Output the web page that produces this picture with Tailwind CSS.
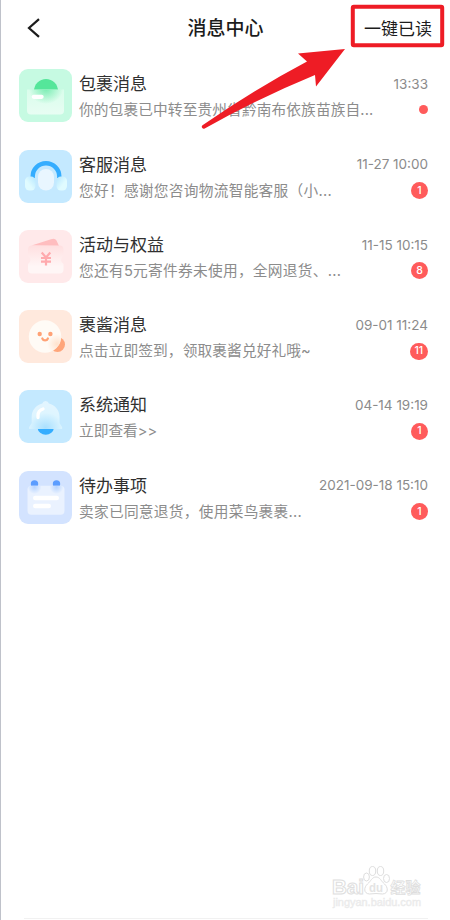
<!DOCTYPE html>
<html lang="zh-CN">
  <head>
    <meta charset="UTF-8" />
    <meta name="viewport" content="width=device-width, initial-scale=1.0" />
    <title>消息中心</title>
    <script src="https://cdn.jsdelivr.net/npm/@tailwindcss/browser@4"></script>
  </head>
  <body class="bg-white font-['Inter','Noto_Sans_CJK_SC',sans-serif]">
    <div class="relative flex flex-col w-[450px] h-[920px] overflow-hidden border-l border-[#bfc2ca] bg-white">
      <!-- header -->
      <header class="grid grid-cols-3 items-center h-14 pl-[25px] pr-[18px] text-[#1c1c1c]">
        <svg class="w-4 h-5" viewBox="0 0 16 20" fill="none" stroke="#1c1c1c" stroke-width="2.2">
          <path d="M13 1.2 3 10l10 8.800" />
        </svg>
        <h1 class="text-[19px] leading-7 font-medium whitespace-nowrap justify-self-center ml-[-7px] mt-0.5">消息中心</h1>
        <button class="text-[17px] leading-6 whitespace-nowrap justify-self-end mt-0.5">一键已读</button>
      </header>

      <!-- messages -->
      <ul class="flex flex-col pl-[18px] pr-[22px] pt-[13.3px]">
        <li class="flex h-[80.25px]">
          <svg class="w-[53px] h-[53px] shrink-0" viewBox="0 0 53 53">
            <defs>
              <linearGradient id="parcel" x1="0" y1="0" x2="0" y2="1">
                <stop offset="0" stop-color="#d9fdeb" />
                <stop offset="1" stop-color="#e8fdf3" />
              </linearGradient>
              <radialGradient id="parcelGlow">
                <stop offset="0" stop-color="#7cedb4" />
                <stop offset="1" stop-color="#7cedb4" stop-opacity="0" />
              </radialGradient>
              <clipPath id="parcelClip"><path d="M8 20.5h37v21a4 4 0 0 1-4 4H12a4 4 0 0 1-4-4z" /></clipPath>
            </defs>
            <rect width="53" height="53" rx="9" fill="#c6fae2" />
            <circle cx="27" cy="22" r="12" fill="#55e69a" />
            <g clip-path="url(#parcelClip)">
              <rect x="8" y="20" width="37" height="26" fill="url(#parcel)" />
              <ellipse cx="27" cy="20" rx="17" ry="15" fill="url(#parcelGlow)" />
            </g>
            <rect x="12.7" y="25.7" width="12" height="4.2" rx="2.1" fill="#fff" />
          </svg>
          <div class="flex-1 pl-[7px] pt-px">
            <div class="flex justify-between items-center h-7">
              <h2 class="text-[17px] leading-7 text-[#303030]">包裹消息</h2>
              <time class="text-[13.5px] text-[#8b8b8b]">13:33</time>
            </div>
            <div class="flex justify-between items-center h-6">
              <p class="text-[14.7px] tracking-[0.12px] text-[#8c8c8c] whitespace-nowrap">你的包裹已中转至贵州省黔南布依族苗族自...</p>
              <span class="size-[9px] rounded-full bg-[#ff5b5b] -mt-px"></span>
            </div>
          </div>
        </li>

        <li class="flex h-[80.25px]">
          <svg class="w-[53px] h-[53px] shrink-0" viewBox="0 0 53 53">
            <defs>
              <linearGradient id="earL" x1="1" y1="0" x2="0" y2="1">
                <stop offset="0" stop-color="#b5e6ff" />
                <stop offset="0.6" stop-color="#e0fbff" />
              </linearGradient>
              <linearGradient id="earR" x1="0" y1="0" x2="1" y2="1">
                <stop offset="0" stop-color="#b5e6ff" />
                <stop offset="0.6" stop-color="#e0fbff" />
              </linearGradient>
            </defs>
            <rect width="53" height="53" rx="9" fill="#c4e9ff" />
            <path d="M13.7 28v-1.5a13 13 0 0 1 26.6 0V28" fill="none" stroke="#34adff" stroke-width="4.4" />
            <rect x="19" y="19" width="16" height="21.5" rx="8" fill="#e9f6ff" />
            <rect x="6" y="26.5" width="10.5" height="14" rx="4.5" fill="url(#earL)" />
            <rect x="37.5" y="26.5" width="10.5" height="14" rx="4.5" fill="url(#earR)" />
          </svg>
          <div class="flex-1 pl-[7px] pt-px">
            <div class="flex justify-between items-center h-7">
              <h2 class="text-[17px] leading-7 text-[#303030]">客服消息</h2>
              <time class="text-[13.5px] text-[#8b8b8b]">11-27 10:00</time>
            </div>
            <div class="flex justify-between items-center h-6">
              <p class="text-[14.7px] tracking-[0.28px] text-[#8c8c8c] whitespace-nowrap">您好！感谢您咨询物流智能客服（小...</p>
              <span class="flex items-center justify-center size-[17px] rounded-full bg-[#ff5b5b] text-[10.5px] font-medium text-white">1</span>
            </div>
          </div>
        </li>

        <li class="flex h-[80.25px]">
          <svg class="w-[53px] h-[53px] shrink-0" viewBox="0 0 53 53">
            <defs>
              <linearGradient id="coupon" x1="0" y1="0" x2="0" y2="1">
                <stop offset="0" stop-color="#ffdfe0" />
                <stop offset="0.75" stop-color="#fff6f6" />
              </linearGradient>
            </defs>
            <rect width="53" height="53" rx="9" fill="#ffe9ea" />
            <path d="M12.5 15.5 32 9.3q4-1.3 5.5 1.2L40 16z" fill="#ffbdbf" />
            <path d="M13 15.5h27.5a4 4 0 0 1 4 4V26a4.500 4.500 0 0 0 0 8v5.500a4 4 0 0 1-4 4H13a4 4 0 0 1-4-4V34a4.500 4.500 0 0 0 0-8v-6.500a4 4 0 0 1 4-4z" fill="url(#coupon)" />
            <path d="m22.700 22.500 4.300 5 4.300-5M22 28h10M22 31.600h10M27 27.500v8" fill="none" stroke="#ffaaae" stroke-width="2.200" />
          </svg>
          <div class="flex-1 pl-[7px] pt-px">
            <div class="flex justify-between items-center h-7">
              <h2 class="text-[17px] leading-7 text-[#303030]">活动与权益</h2>
              <time class="text-[13.5px] text-[#8b8b8b]">11-15 10:15</time>
            </div>
            <div class="flex justify-between items-center h-6">
              <p class="text-[14.7px] tracking-[0.28px] text-[#8c8c8c] whitespace-nowrap">您还有5元寄件券未使用，全网退货、...</p>
              <span class="flex items-center justify-center size-[17px] rounded-full bg-[#ff5b5b] text-[10.5px] font-medium text-white">8</span>
            </div>
          </div>
        </li>

        <li class="flex h-[80.25px]">
          <svg class="w-[53px] h-[53px] shrink-0" viewBox="0 0 53 53">
            <defs>
              <radialGradient id="faceGlow">
                <stop offset="0" stop-color="#ffe2cd" />
                <stop offset="1" stop-color="#ffe2cd" stop-opacity="0" />
              </radialGradient>
              <clipPath id="faceClip"><circle cx="26" cy="26.5" r="16.2" /></clipPath>
            </defs>
            <rect width="53" height="53" rx="9" fill="#ffe9dd" />
            <circle cx="38.5" cy="34.5" r="7.500" fill="#ffa57a" />
            <circle cx="26" cy="26.5" r="16.2" fill="#fffbf6" />
            <circle cx="38" cy="34" r="10" fill="url(#faceGlow)" clip-path="url(#faceClip)" />
            <circle cx="20.7" cy="24" r="2.2" fill="#ffa276" />
            <circle cx="31.4" cy="24" r="2.2" fill="#ffa276" />
            <path d="M23.3 28.500a3 3 0 0 0 5.600 0" fill="none" stroke="#ffa276" stroke-width="2.200" stroke-linecap="round" />
          </svg>
          <div class="flex-1 pl-[7px] pt-px">
            <div class="flex justify-between items-center h-7">
              <h2 class="text-[17px] leading-7 text-[#303030]">裹酱消息</h2>
              <time class="text-[13.5px] text-[#8b8b8b]">09-01 11:24</time>
            </div>
            <div class="flex justify-between items-center h-6">
              <p class="text-[14.7px] tracking-[0.12px] text-[#8c8c8c] whitespace-nowrap">点击立即签到，领取裹酱兑好礼哦~</p>
              <span class="flex items-center justify-center w-[18.5px] h-[17px] rounded-full bg-[#ff5b5b] text-[10.5px] font-medium text-white">11</span>
            </div>
          </div>
        </li>

        <li class="flex h-[80.25px]">
          <svg class="w-[53px] h-[53px] shrink-0" viewBox="0 0 53 53">
            <defs>
              <radialGradient id="bell" cx="0.5" cy="0.95" r="0.75">
                <stop offset="0" stop-color="#a9e0ff" />
                <stop offset="0.7" stop-color="#def5ff" />
                <stop offset="1" stop-color="#e2f5ff" />
              </radialGradient>
            </defs>
            <rect width="53" height="53" rx="9" fill="#c4e9ff" />
            <path d="M18.5 38H35a8.300 7.500 0 0 1-16.500 0z" fill="#34adff" />
            <path d="M23.3 13.500a3.400 3.400 0 0 1 6.600 0c6 1.500 10.600 6.500 10.600 13V33l2.500 4q.9 2-1.400 2h-30q-2.300 0-1.400-2l2.500-4v-6.500c0-6.500 4.600-11.500 10.600-13z" fill="url(#bell)" />
            <path d="M19 27.500v-2q0-5 5-6.500" fill="none" stroke="#fff" stroke-width="3.300" stroke-linecap="round" />
          </svg>
          <div class="flex-1 pl-[7px] pt-px">
            <div class="flex justify-between items-center h-7">
              <h2 class="text-[17px] leading-7 text-[#303030]">系统通知</h2>
              <time class="text-[13.5px] text-[#8b8b8b]">04-14 19:19</time>
            </div>
            <div class="flex justify-between items-center h-6">
              <p class="text-[14.7px] text-[#8c8c8c] whitespace-nowrap">立即查看&gt;&gt;</p>
              <span class="flex items-center justify-center size-[17px] rounded-full bg-[#ff5b5b] text-[10.5px] font-medium text-white">1</span>
            </div>
          </div>
        </li>

        <li class="flex h-[80.25px]">
          <svg class="w-[53px] h-[53px] shrink-0" viewBox="0 0 53 53">
            <defs>
              <radialGradient id="pinGlow">
                <stop offset="0" stop-color="#b7d4ff" />
                <stop offset="1" stop-color="#b7d4ff" stop-opacity="0" />
              </radialGradient>
              <clipPath id="pageClip"><rect x="8.5" y="14.800" width="37" height="29" rx="4" /></clipPath>
            </defs>
            <rect width="53" height="53" rx="9" fill="#d3e3ff" />
            <circle cx="15.5" cy="13" r="3.700" fill="#5c9dff" />
            <circle cx="37.5" cy="13" r="3.700" fill="#5c9dff" />
            <g clip-path="url(#pageClip)">
              <rect x="8" y="14" width="38" height="30" fill="#eaf2ff" />
              <ellipse cx="15.5" cy="16" rx="7" ry="7" fill="url(#pinGlow)" />
              <ellipse cx="37.5" cy="16" rx="7" ry="7" fill="url(#pinGlow)" />
            </g>
            <rect x="14" y="24.800" width="26" height="4.400" rx="2.200" fill="#fff" />
            <rect x="14" y="32.800" width="18" height="4.400" rx="2.200" fill="#fff" />
          </svg>
          <div class="flex-1 pl-[7px] pt-px">
            <div class="flex justify-between items-center h-7">
              <h2 class="text-[17px] leading-7 text-[#303030]">待办事项</h2>
              <time class="text-[13.5px] text-[#8b8b8b]">2021-09-18 15:10</time>
            </div>
            <div class="flex justify-between items-center h-6">
              <p class="text-[14.7px] tracking-[0.28px] text-[#8c8c8c] whitespace-nowrap">卖家已同意退货，使用菜鸟裹裹...</p>
              <span class="flex items-center justify-center size-[17px] rounded-full bg-[#ff5b5b] text-[10.5px] font-medium text-white">1</span>
            </div>
          </div>
        </li>
      </ul>

      <div class="mt-auto mb-px ml-[23px] mr-[22px] h-px bg-[#f1f1f1]"></div>

      <!-- callout over the list -->
      <svg class="absolute top-0 -left-px w-[450px] h-[140px]" viewBox="0 0 450 140" fill="#ee1c25">
        <path d="M345 49 298 53.500 307 61.500Q255 89 202.500 125.200a2 2 0 0 0 2.200 3.300Q259 98 315 75l1 11.500z" />
        <rect x="352.800" y="6.800" width="89.400" height="38.400" rx="1" fill="none" stroke="#ee1c25" stroke-width="4" />
      </svg>

      <!-- watermark -->
      <svg class="absolute left-[329px] top-[860px] w-[100px] h-[52px] font-['Liberation_Sans','Noto_Sans_CJK_SC',sans-serif]" viewBox="330 860 100 52" fill="#fff" stroke="#dedede" stroke-width="1">
        <text x="332" y="893.500" font-size="20" font-weight="700" textLength="32" lengthAdjust="spacingAndGlyphs">Bai</text>
        <ellipse cx="366.500" cy="877" rx="2.900" ry="4" />
        <ellipse cx="372.500" cy="871" rx="3.200" ry="4.500" />
        <ellipse cx="380.500" cy="871" rx="3.200" ry="4.500" />
        <ellipse cx="386.500" cy="878.500" rx="3" ry="4" />
        <path d="M376 877c4 0 5 4 8.500 7s4.500 9.500-2 10q-6.500-1-13 0c-6.500-.5-5.500-7-2-10s4.500-7 8.500-7z" />
        <text x="369" y="892" font-size="13" font-weight="700" textLength="14" lengthAdjust="spacingAndGlyphs" fill="#e4e4e4" stroke="none">du</text>
        <text x="390.500" y="892.500" font-size="15" font-weight="700" textLength="30" stroke-width="0.800">经验</text>
        <text x="333" y="905.500" font-size="10.500" textLength="88" lengthAdjust="spacingAndGlyphs" fill="#eeeeee" stroke="#eaeaea" stroke-width="0.400">jingyan.baidu.com</text>
      </svg>
    </div>
  </body>
</html>
